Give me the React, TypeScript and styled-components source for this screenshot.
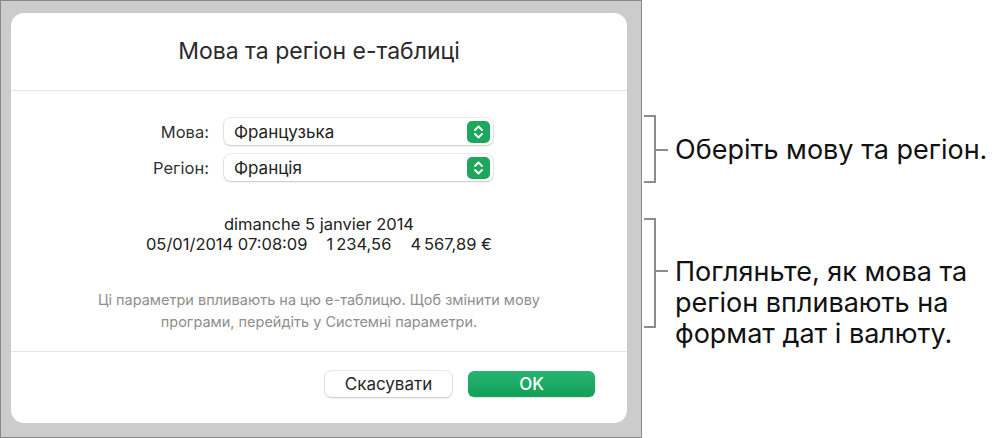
import React from 'react';
import styled, { createGlobalStyle } from 'styled-components';

const colors = {
  frame: '#cccccc',
  frameBorder: '#8a8a8a',
  white: '#ffffff',
  rule: '#e6e6e6',
  text: '#262626',
  muted: '#8e8e8e',
  green: '#1ea65c',
  bracket: '#8c8c8c',
};

const GlobalStyle = createGlobalStyle`
  html, body {
    margin: 0;
    padding: 0;
    background: #ffffff;
  }
  body {
    font-family: Inter, 'Noto Sans', sans-serif;
    color: ${colors.text};
  }
`;

const Page = styled.div`
  display: flex;
  width: 999px;
  height: 438px;
  overflow: hidden;
`;

const Frame = styled.div`
  box-sizing: border-box;
  width: 642px;
  height: 438px;
  flex: none;
  background: ${colors.frame};
  border: 1px solid ${colors.frameBorder};
  padding: 12px 0 0 10px;
`;

const Dialog = styled.div`
  width: 616px;
  height: 410px;
  background: ${colors.white};
  border-radius: 13px;
  display: flex;
  flex-direction: column;
`;

const Header = styled.div`
  height: 77px;
  display: flex;
  align-items: center;
  justify-content: center;
  border-bottom: 1px solid ${colors.rule};
`;

const Title = styled.h1`
  margin: 0 0 2px;
  font-size: 23px;
  font-weight: 400;
  color: #2a2a2a;
`;

const Body = styled.div`
  flex: 1;
  display: flex;
  flex-direction: column;
  align-items: center;
  padding-top: 27px;
  border-bottom: 1px solid ${colors.rule};
`;

const Form = styled.div`
  display: grid;
  grid-template-columns: auto 269px;
  column-gap: 15px;
  row-gap: 9px;
  align-items: center;
  margin-left: 8px;
`;

const Label = styled.span`
  justify-self: end;
  font-size: 16.5px;
  color: #333333;
`;

const Popup = styled.div`
  box-sizing: border-box;
  height: 27px;
  border-radius: 6px;
  background: ${colors.white};
  box-shadow: 0 0 0 0.5px rgba(0, 0, 0, 0.14), 0 1px 2px rgba(0, 0, 0, 0.16);
  display: flex;
  align-items: center;
  justify-content: space-between;
  padding: 0 3px 0 10px;
  font-size: 17px;
  color: #222222;
`;

const Sample = styled.div`
  margin-top: 33px;
  text-align: center;
  font-size: 16.5px;
  line-height: 20px;
  color: #222222;
`;

const SampleRow = styled.div`
  display: flex;
  gap: 19px;
  justify-content: center;
`;

const Note = styled.p`
  margin: 35px 0 0;
  text-align: center;
  font-size: 14.5px;
  line-height: 22px;
  color: ${colors.muted};
`;

const Footer = styled.div`
  height: 71px;
  box-sizing: border-box;
  display: flex;
  justify-content: flex-end;
  gap: 16px;
  padding: 19px 32px 0 0;
`;

const Button = styled.button<{ $primary?: boolean }>`
  width: 127px;
  height: 26px;
  border: none;
  border-radius: 6px;
  font-family: inherit;
  font-size: 17px;
  font-weight: ${(p) => (p.$primary ? 500 : 400)};
  cursor: pointer;
  color: ${(p) => (p.$primary ? colors.white : '#262626')};
  background: ${(p) =>
    p.$primary ? 'linear-gradient(#27b472, #11a057)' : colors.white};
  box-shadow: ${(p) =>
    p.$primary
      ? '0 1px 1px rgba(0,0,0,0.12)'
      : '0 0 0 0.5px rgba(0,0,0,0.16), 0 1px 2px rgba(0,0,0,0.16)'};
`;

const Notes = styled.div`
  display: flex;
  flex-direction: column;
  padding: 115px 0 0 2px;
  gap: 35px;
`;

const Annotation = styled.div<{ $top?: number }>`
  display: flex;
  align-items: ${(p) => (p.$top !== undefined ? 'flex-start' : 'center')};
  gap: 5px;
`;

const AnnotationText = styled.div<{ $top?: number }>`
  font-size: 27px;
  line-height: 31px;
  color: #111111;
  white-space: nowrap;
  padding-top: ${(p) => p.$top ?? 0}px;
`;

function Stepper() {
  return (
    <svg width="23" height="22" viewBox="0 0 23 22">
      <rect x="0" y="0" width="23" height="22" rx="5" fill={colors.green} />
      <path d="M8 9l3.5-3.5L15 9" fill="none" stroke="#fff" strokeWidth="1.8" strokeLinecap="round" strokeLinejoin="round" />
      <path d="M8 13l3.5 3.5L15 13" fill="none" stroke="#fff" strokeWidth="1.8" strokeLinecap="round" strokeLinejoin="round" />
    </svg>
  );
}

function Bracket({ height, tick }: { height: number; tick: number }) {
  return (
    <svg width="26" height={height} viewBox={`0 0 26 ${height}`}>
      <path
        d={`M0 1H11V${height - 1}H0M11 ${tick}H24`}
        fill="none"
        stroke={colors.bracket}
        strokeWidth="2"
      />
    </svg>
  );
}

function App() {
  return (
    <Page>
      <GlobalStyle />
      <Frame>
        <Dialog>
          <Header>
            <Title>Мова та регіон е-таблиці</Title>
          </Header>
          <Body>
            <Form>
              <Label>Мова:</Label>
              <Popup>
                Французька
                <Stepper />
              </Popup>
              <Label>Регіон:</Label>
              <Popup>
                Франція
                <Stepper />
              </Popup>
            </Form>
            <Sample>
              <div>dimanche 5 janvier 2014</div>
              <SampleRow>
                <span>05/01/2014 07:08:09</span>
                <span>1{'\u202F'}234,56</span>
                <span>4{'\u202F'}567,89 €</span>
              </SampleRow>
            </Sample>
            <Note>
              Ці параметри впливають на цю е-таблицю. Щоб змінити мову
              <br />
              програми, перейдіть у Системні параметри.
            </Note>
          </Body>
          <Footer>
            <Button>Скасувати</Button>
            <Button $primary>OK</Button>
          </Footer>
        </Dialog>
      </Frame>
      <Notes>
        <Annotation>
          <Bracket height={68} tick={35} />
          <AnnotationText>Оберіть мову та регіон.</AnnotationText>
        </Annotation>
        <Annotation $top={38}>
          <Bracket height={110} tick={53} />
          <AnnotationText $top={38}>
            Погляньте, як мова та
            <br />
            регіон впливають на
            <br />
            формат дат і валюту.
          </AnnotationText>
        </Annotation>
      </Notes>
    </Page>
  );
}

export default App;
